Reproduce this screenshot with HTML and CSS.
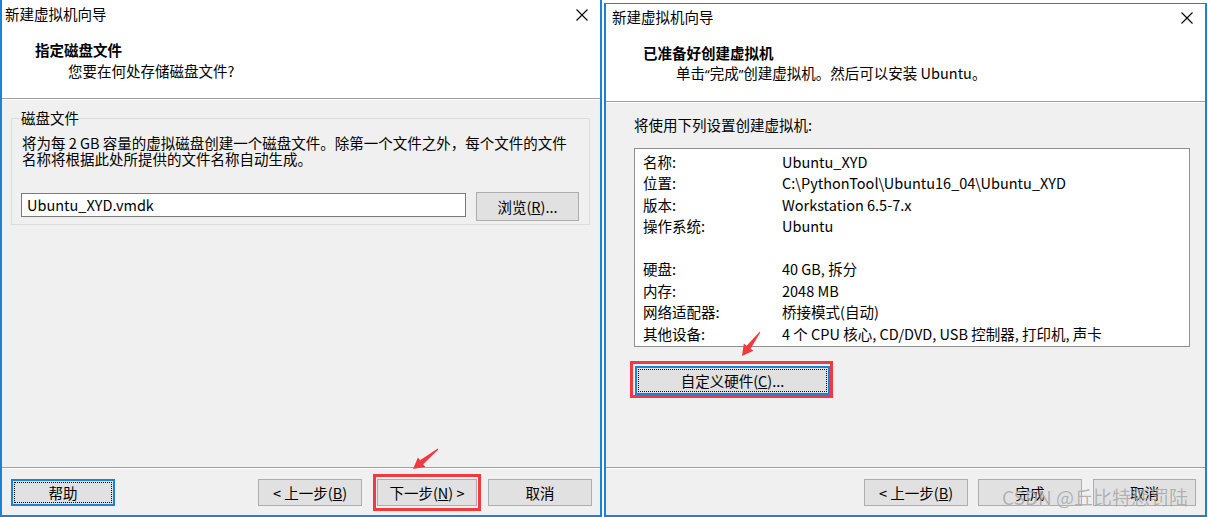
FILE: index.html
```html
<!DOCTYPE html>
<html lang="zh-CN">
<head>
<meta charset="utf-8">
<title>新建虚拟机向导</title>
<link rel="stylesheet" href="styles.css">
</head>
<body>
<div class="screen">
  <div class="win win-left">
    <div class="head">
      <div class="titlebar">
        <span class="title">新建虚拟机向导</span>
        <svg class="close" width="12" height="12" viewBox="0 0 12 12"><path d="M0.5 0.5L11.5 11.5M11.5 0.5L0.5 11.5" stroke="#000" stroke-width="1.1" fill="none"/></svg>
      </div>
      <div class="h1">指定磁盘文件</div>
      <div class="h2">您要在何处存储磁盘文件?</div>
    </div>
    <div class="body body-left">
      <fieldset class="group">
        <legend class="legend">磁盘文件</legend>
        <p class="desc">将为每 2 GB 容量的虚拟磁盘创建一个磁盘文件。除第一个文件之外，每个文件的文件<br>名称将根据此处所提供的文件名称自动生成。</p>
        <div class="file-row">
          <div class="input">Ubuntu_XYD.vmdk</div>
          <div class="btn btn-browse">浏览(<u>R</u>)...</div>
        </div>
      </fieldset>
    </div>
    <div class="foot">
      <div class="btn btn-focus">帮助</div>
      <div class="spacer"></div>
      <div class="btn">&lt; 上一步(<u>B</u>)</div>
      <div class="mark mark-next"><div class="btn btn-next">下一步(<u>N</u>) &gt;</div></div>
      <div class="btn btn-cancel-l">取消</div>
    </div>
  </div>

  <div class="win win-right">
    <div class="head">
      <div class="titlebar">
        <span class="title">新建虚拟机向导</span>
        <svg class="close" width="12" height="12" viewBox="0 0 12 12"><path d="M0.5 0.5L11.5 11.5M11.5 0.5L0.5 11.5" stroke="#000" stroke-width="1.1" fill="none"/></svg>
      </div>
      <div class="h1">已准备好创建虚拟机</div>
      <div class="h2">单击<span class="q">“</span>完成<span class="q">”</span>创建虚拟机。然后可以安装 Ubuntu。</div>
    </div>
    <div class="body body-right">
      <div class="intro">将使用下列设置创建虚拟机:</div>
      <div class="list">
        <div class="row"><span class="k">名称:</span><span class="v">Ubuntu_XYD</span></div>
        <div class="row"><span class="k">位置:</span><span class="v">C:\PythonTool\Ubuntu16_04\Ubuntu_XYD</span></div>
        <div class="row"><span class="k">版本:</span><span class="v">Workstation 6.5-7.x</span></div>
        <div class="row"><span class="k">操作系统:</span><span class="v">Ubuntu</span></div>
        <div class="row"><span class="k"></span><span class="v"></span></div>
        <div class="row"><span class="k">硬盘:</span><span class="v">40 GB, 拆分</span></div>
        <div class="row"><span class="k">内存:</span><span class="v">2048 MB</span></div>
        <div class="row"><span class="k">网络适配器:</span><span class="v">桥接模式(自动)</span></div>
        <div class="row"><span class="k">其他设备:</span><span class="v">4 个 CPU 核心, CD/DVD, USB 控制器, 打印机, 声卡</span></div>
      </div>
      <div class="mark mark-custom"><div class="btn btn-focus btn-custom">自定义硬件(<u>C</u>)...</div></div>
    </div>
    <div class="foot foot-right">
      <div class="spacer"></div>
      <div class="btn">&lt; 上一步(<u>B</u>)</div>
      <div class="btn btn-finish">完成</div>
      <div class="btn btn-cancel-r">取消</div>
    </div>
  </div>

  <svg class="arrows" width="1208" height="517" viewBox="0 0 1208 517">
    <polygon fill="#f03a3e" points="413,469 425.3,466.9 423.2,464.2 438.3,449.4 437.7,448.6 420.1,460.3 417.9,457.5"/>
    <polygon fill="#f03a3e" points="742,356 753.4,350.8 750.6,348.7 760.4,332.3 759.6,331.7 746.6,345.7 743.8,343.6"/>
  </svg>
  <div class="watermark">CSDN @丘比特惩罚陆</div>
</div>
</body>
</html>
```

FILE: styles.css
```css
* { box-sizing: border-box; }
html, body { margin: 0; padding: 0; }
body {
  width: 1208px;
  height: 517px;
  overflow: hidden;
  background: #ffffff;
  font-family: "Noto Sans CJK SC", "Noto Sans", sans-serif;
  font-size: 14.5px;
  color: #000;
}
.screen {
  position: relative;
  display: flex;
  gap: 2px;
  height: 517px;
}
.win {
  display: flex;
  flex-direction: column;
  background: #f0f0f0;
  border: 2px solid #1883d7;
  border-top: 0;
}
.win-left { width: 602px; height: 517px; }
.win-right {
  width: 603px;
  height: 514px;
  margin-top: 3px;
  border-top: 1px solid #1883d7;
}
.head {
  background: #fff;
  border-bottom: 1px solid #a0a0a0;
  flex: none;
}
.win-left .head { height: 99px; }
.win-right .head { height: 98px; }
.titlebar {
  display: flex;
  align-items: center;
  justify-content: space-between;
  line-height: 20px;
  height: 24px;
}
.win-left .titlebar { padding: 4px 12px 0 3px; }
.win-right .titlebar { padding: 3px 12px 0 6px; height: 23px; }
.close { display: block; margin-top: 2px; }
.h1 { font-weight: 700; line-height: 20px; white-space: nowrap; }
.h2 { line-height: 20px; white-space: nowrap; }
.q { font-family: "Noto Sans", sans-serif; font-size: 13px; }
.win-left .h1 { margin-top: 15.5px; padding-left: 33px; }
.win-left .h2 { margin-top: 1px; padding-left: 66px; }
.win-right .h1 { margin-top: 16px; padding-left: 37px; }
.win-right .h2 { margin-top: 0; padding-left: 70px; }

.body { flex: 1; border-top: 1px solid #fff; }
.body-left { padding: 10px 10px 0 9px; }
.group {
  margin: 0;
  border: 1px solid #dcdcdc;
  padding: 0 10px 3px 9px;
  min-width: 0;
}
.legend { padding: 0; line-height: 16px; margin-left: 0; }
.desc {
  margin: 8.5px 0 0 1px;
  line-height: 16.5px;
  white-space: nowrap;
}
.file-row {
  display: flex;
  align-items: flex-start;
  margin-top: 24.5px;
  gap: 10px;
}
.input {
  width: 445px;
  height: 24px;
  margin-top: 1px;
  background: #fff;
  border: 1px solid #7a7a7a;
  line-height: 22px;
  padding-left: 5px;
  white-space: nowrap;
}
.btn {
  flex: none;
  display: flex;
  align-items: center;
  justify-content: center;
  width: 104px;
  height: 27px;
  background: #e1e1e1;
  border: 1px solid #adadad;
  white-space: nowrap;
  line-height: 20px;
}
.btn-browse { width: 103px; height: 29px; }
.btn-focus {
  border: 2px solid #1883d7;
  outline: 1px dotted #000;
  outline-offset: -4px;
}
.foot {
  flex: none;
  height: 48px;
  border-top: 1px solid #a0a0a0;
  box-shadow: inset 0 1px 0 #fff;
  display: flex;
  align-items: center;
  padding: 2px 8px 0 9px;
}
.spacer { flex: 1; }
.btn-next { width: 100px; }
.mark {
  flex: none;
  border: 3px solid #f03a3e;
}
.mark-next { padding: 2px 1px; margin-left: 11px; margin-right: 7px; }
.btn-cancel-l { width: 104px; }
.foot-right { padding-right: 9px; }
.btn-finish { margin-left: 10px; }
.btn-cancel-r { margin-left: 11px; width: 103px; }

.body-right { padding: 12px 15px 0 28px; }
.intro { line-height: 20px; white-space: nowrap; }
.list {
  margin-top: 13px;
  height: 199px;
  background: #fff;
  border: 1px solid #8e8f8f;
  padding: 1.5px 0 0 8px;
}
.row { display: flex; height: 21.5px; line-height: 21.5px; white-space: nowrap; }
.k { width: 139px; flex: none; }
.mark-custom {
  display: inline-block;
  margin-top: 14px;
  margin-left: -4px;
  padding: 2px 0 0 2px;
}
.btn-custom { width: 195px; height: 29px; }

.arrows {
  position: absolute;
  left: 0;
  top: 0;
  pointer-events: none;
}
.watermark {
  position: absolute;
  left: 1002px;
  top: 484px;
  font-size: 19px;
  line-height: 26px;
  color: rgba(120, 120, 120, 0.55);
  text-shadow: 0 0 1px rgba(255, 255, 255, 0.6);
  white-space: nowrap;
  pointer-events: none;
}
```
